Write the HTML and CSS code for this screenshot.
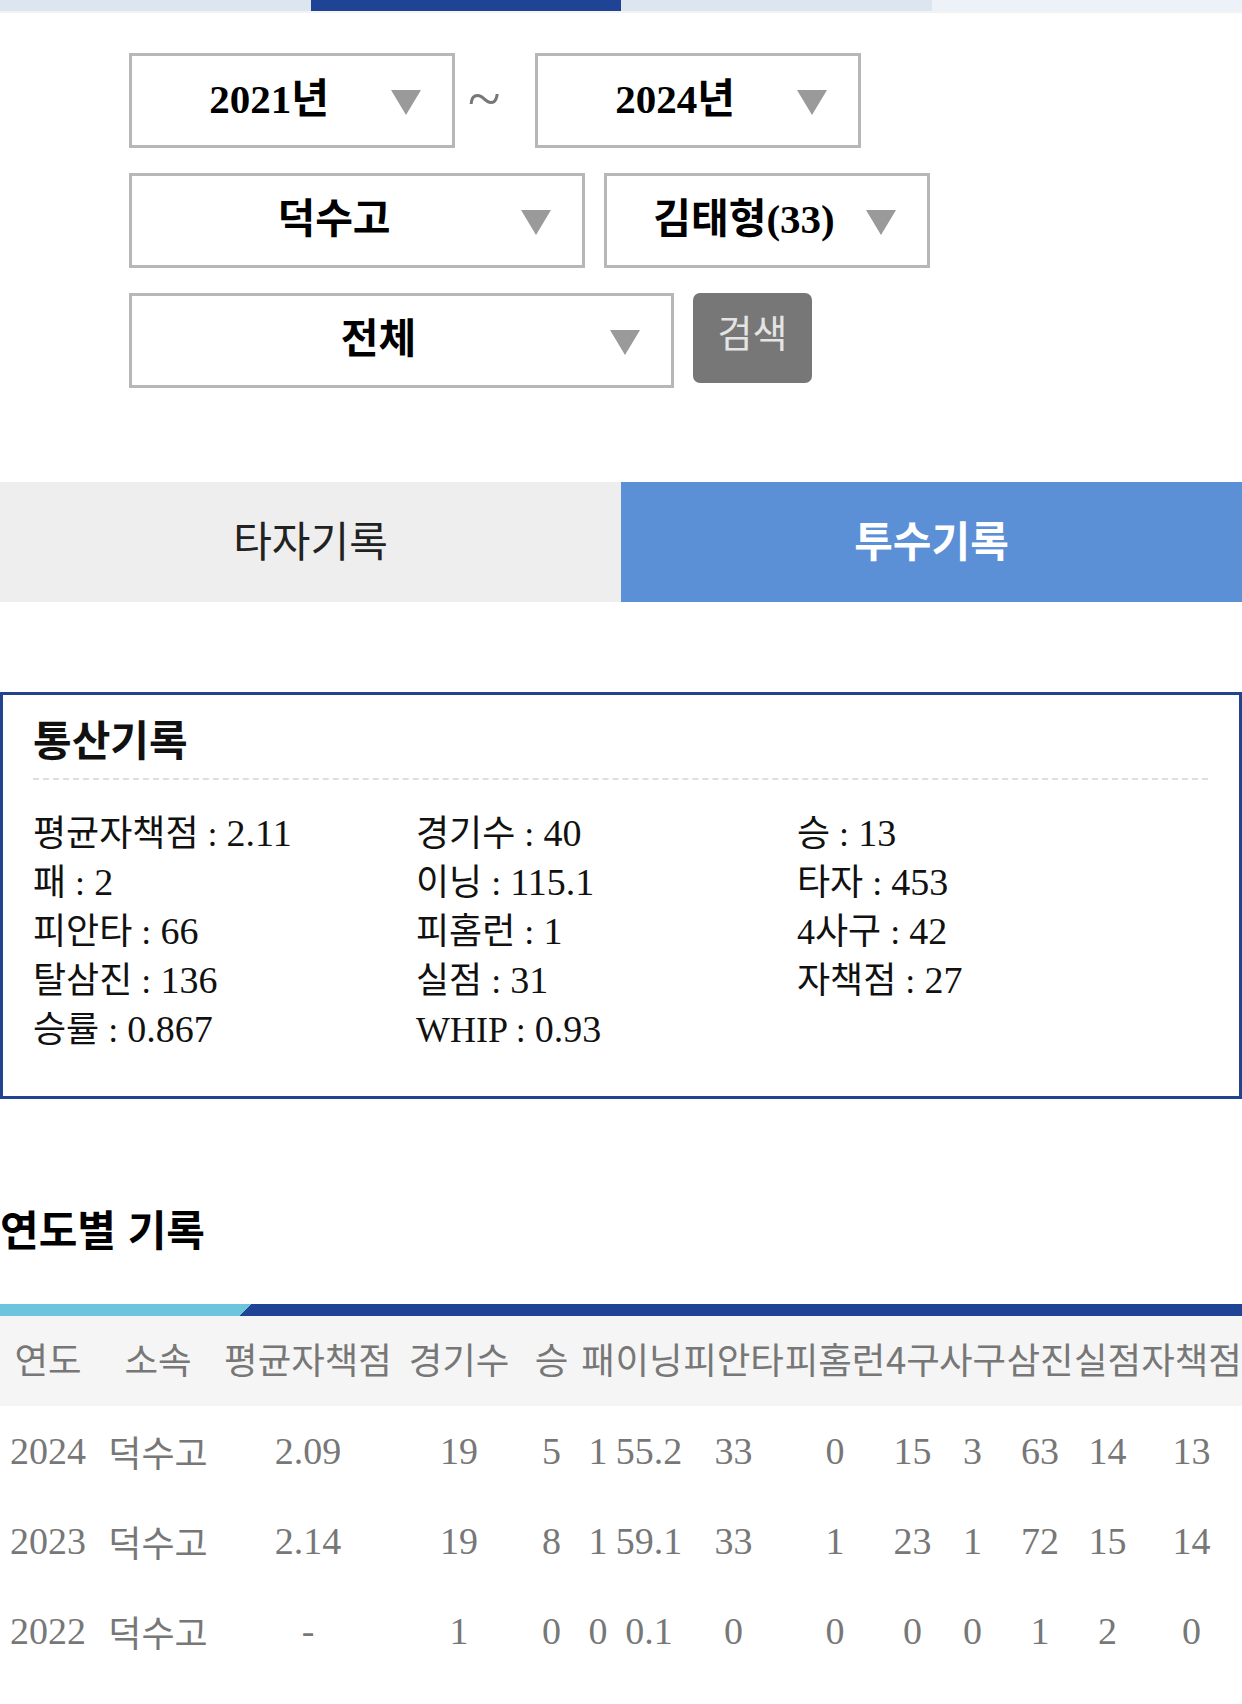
FILE: index.html
```html
<!DOCTYPE html>
<html lang="ko">
  <head>
    <meta charset="UTF-8" />
    <meta name="viewport" content="width=device-width, initial-scale=1.0" />
    <title>투수기록</title>
    <link rel="stylesheet" href="styles.css">
  </head>
  <body>
    <div class="topbar">
      <span class="seg"></span>
      <span class="seg on"></span>
      <span class="seg"></span>
      <span class="seg pale"></span>
    </div>

    <div class="filters">
      <div class="frow">
        <div class="sel w1">
          <span class="val">2021년</span>
          <svg class="arrow" viewBox="0 0 32 27"><polygon points="1,1 31,1 16,26" /></svg>
        </div>
        <span class="tilde">~</span>
        <div class="sel w1">
          <span class="val">2024년</span>
          <svg class="arrow" viewBox="0 0 32 27"><polygon points="1,1 31,1 16,26" /></svg>
        </div>
      </div>
      <div class="frow">
        <div class="sel w2">
          <span class="val">덕수고</span>
          <svg class="arrow" viewBox="0 0 32 27"><polygon points="1,1 31,1 16,26" /></svg>
        </div>
        <div class="sel w1 gap">
          <span class="val">김태형(33)</span>
          <svg class="arrow" viewBox="0 0 32 27"><polygon points="1,1 31,1 16,26" /></svg>
        </div>
      </div>
      <div class="frow">
        <div class="sel w3">
          <span class="val">전체</span>
          <svg class="arrow" viewBox="0 0 32 27"><polygon points="1,1 31,1 16,26" /></svg>
        </div>
        <button class="search">검색</button>
      </div>
    </div>

    <div class="tabs">
      <div class="tab">타자기록</div>
      <div class="tab active">투수기록</div>
    </div>

    <div class="summary">
      <h2>통산기록</h2>
      <div class="stats">
        <span>평균자책점 : <b class="n">2.11</b></span>
        <span>경기수 : <b class="n">40</b></span>
        <span>승 : <b class="n">13</b></span>
        <span>패 : <b class="n">2</b></span>
        <span>이닝 : <b class="n">115.1</b></span>
        <span>타자 : <b class="n">453</b></span>
        <span>피안타 : <b class="n">66</b></span>
        <span>피홈런 : <b class="n">1</b></span>
        <span>4사구 : <b class="n">42</b></span>
        <span>탈삼진 : <b class="n">136</b></span>
        <span>실점 : <b class="n">31</b></span>
        <span>자책점 : <b class="n">27</b></span>
        <span>승률 : <b class="n">0.867</b></span>
        <span>WHIP : <b class="n">0.93</b></span>
      </div>
    </div>

    <h2 class="yearly">연도별 기록</h2>
    <div class="tablebar"></div>
    <table class="records">
      <colgroup>
        <col style="width:96px" />
        <col style="width:124px" />
        <col style="width:176px" />
        <col style="width:126px" />
        <col style="width:59px" />
        <col style="width:34px" />
        <col style="width:68px" />
        <col style="width:101px" />
        <col style="width:102px" />
        <col style="width:53px" />
        <col style="width:67px" />
        <col style="width:68px" />
        <col style="width:67px" />
        <col style="width:101px" />
      </colgroup>
      <thead>
        <tr>
          <th>연도</th><th>소속</th><th>평균자책점</th><th>경기수</th><th>승</th><th>패</th><th>이닝</th>
          <th>피안타</th><th>피홈런</th><th>4구</th><th>사구</th><th>삼진</th><th>실점</th><th>자책점</th>
        </tr>
      </thead>
      <tbody>
        <tr>
          <td>2024</td><td class="team">덕수고</td><td>2.09</td><td>19</td><td>5</td><td>1</td><td>55.2</td>
          <td>33</td><td>0</td><td>15</td><td>3</td><td>63</td><td>14</td><td>13</td>
        </tr>
        <tr>
          <td>2023</td><td class="team">덕수고</td><td>2.14</td><td>19</td><td>8</td><td>1</td><td>59.1</td>
          <td>33</td><td>1</td><td>23</td><td>1</td><td>72</td><td>15</td><td>14</td>
        </tr>
        <tr>
          <td>2022</td><td class="team">덕수고</td><td>-</td><td>1</td><td>0</td><td>0</td><td>0.1</td>
          <td>0</td><td>0</td><td>0</td><td>0</td><td>1</td><td>2</td><td>0</td>
        </tr>
      </tbody>
    </table>
  </body>
</html>
```

FILE: styles.css
```css
* {
  margin: 0px;
  padding: 0px;
  box-sizing: border-box;
}
body {
  width: 1242px;
  font-family: "Liberation Serif", "Noto Sans CJK KR", serif;
  color: #111;
  background-color: #fff;
  overflow-x: hidden;
}
.topbar {
  display: flex;
  height: 13px;
  border-bottom: 2px solid #f3f3f3;
}
.seg {
  flex: 1;
  background-color: #dde5ef;
}
.seg.on {
  background-color: #1f4496;
}
.seg.pale {
  background-color: #edf1f8;
}
.filters {
  padding-top: 40px;
  padding-left: 129px;
  padding-bottom: 1px;
}
.frow {
  display: flex;
  align-items: flex-start;
  margin-bottom: 25px;
}
.frow:last-child {
  margin-bottom: 0px;
}
.sel {
  display: flex;
  align-items: center;
  height: 95px;
  border: 3px solid #b7b7b7;
  padding: 0 30px 0 16px;
  font-size: 41px;
  font-weight: bold;
  color: #000;
}
.sel.w1 {
  width: 326px;
}
.sel.w2 {
  width: 456px;
}
.sel.w3 {
  width: 545px;
}
.sel.gap {
  margin-left: 19px;
}
.val {
  flex: 1;
  text-align: center;
  white-space: nowrap;
  padding-bottom: 11px;
}
.arrow {
  width: 32px;
  height: 27px;
  fill: #9a9a9a;
  margin-top: 4px;
}
.tilde {
  width: 80px;
  height: 95px;
  line-height: 92px;
  padding-left: 13px;
  font-size: 60px;
  color: #777;
}
.search {
  width: 119px;
  height: 90px;
  margin-left: 19px;
  border: none;
  border-radius: 7px;
  background-color: #777;
  color: #e4e4e4;
  font-family: "Noto Sans CJK KR", sans-serif;
  font-size: 38px;
  line-height: 38px;
  padding-bottom: 14px;
}
.tabs {
  display: flex;
  margin-top: 93px;
  height: 120px;
}
.tab {
  flex: 1;
  text-align: center;
  line-height: 114px;
  padding-bottom: 6px;
  font-family: "Noto Sans CJK KR", sans-serif;
  font-size: 42px;
  background-color: #eee;
  color: #222;
}
.tab.active {
  background-color: #5b8fd6;
  color: #fff;
  font-weight: bold;
}
.summary {
  margin-top: 90px;
  border: 3px solid #22448f;
  padding: 20px 30px 46px 30px;
  height: 407px;
}
.summary h2 {
  font-family: "Noto Sans CJK KR", sans-serif;
  font-size: 42px;
  line-height: 46px;
  font-weight: bold;
  color: #111;
  padding-bottom: 17px;
  border-bottom: 2px dashed #dedede;
  margin-right: 1px;
}
.stats {
  display: grid;
  grid-template-columns: 383px 381px 1fr;
  margin-top: 29px;
  font-size: 36px;
  line-height: 48px;
  color: #111;
}
.stats .n {
  font-size: 38px;
  font-weight: normal;
}
.yearly {
  margin-top: 104px;
  font-family: "Noto Sans CJK KR", sans-serif;
  font-size: 42px;
  line-height: 50px;
  font-weight: bold;
  color: #000;
}
.tablebar {
  margin-top: 51px;
  height: 12px;
  background: linear-gradient(135deg, #6cc4dd 178px, #1f4496 178px);
}
.records {
  width: 1242px;
  table-layout: fixed;
  border-collapse: collapse;
}
.records th {
  height: 90px;
  background-color: #f5f5f5;
  font-family: "Noto Sans CJK KR", sans-serif;
  font-size: 36.5px;
  font-weight: normal;
  color: #777;
  white-space: nowrap;
  text-align: center;
  padding: 0 0 6px 0;
}
.records td {
  height: 90px;
  font-size: 38px;
  color: #777;
  text-align: center;
  white-space: nowrap;
  padding: 0;
}
.records td.team {
  font-family: "Noto Sans CJK KR", sans-serif;
  font-size: 36px;
}
```
